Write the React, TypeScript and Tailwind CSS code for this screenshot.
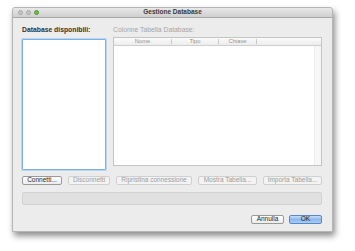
import React from 'react';

const font = { fontFamily: '"Liberation Sans", Arial, sans-serif' };

function Btn({ label, className = '', disabled = false }: { label: string; className?: string; disabled?: boolean }) {
  return (
    <div
      className={`h-[9px] flex items-center justify-center rounded-[2px] border text-[6.5px] leading-none ${
        disabled
          ? 'border-[#d0d0d0] bg-[#f3f3f3] text-[#9c9c9c]'
          : 'border-[#9a9a9a] bg-gradient-to-b from-white to-[#ececec] text-[#222]'
      } ${className}`}
    >
      {label}
    </div>
  );
}

export default function App() {
  return (
    <div className="w-[355px] h-[251px] bg-white overflow-hidden" style={font}>
      <div className="ml-[12px] mt-[7px] w-[321px] h-[225px] bg-[#ececec] rounded-t-[3px] flex flex-col shadow-[2px_4px_6px_rgba(0,0,0,0.45)] border border-[#b5b5b5]">
        {/* title bar */}
        <div className="h-[10px] shrink-0 rounded-t-[3px] bg-gradient-to-b from-[#e8e8e8] to-[#cfcfcf] border-b border-[#a8a8a8] flex items-center relative">
          <div className="flex gap-[3px] pl-[5px]">
            <span className="w-[5px] h-[5px] rounded-full bg-[#c9c9c9] border border-[#a2a2a2]" />
            <span className="w-[5px] h-[5px] rounded-full bg-[#c9c9c9] border border-[#a2a2a2]" />
            <span className="w-[5px] h-[5px] rounded-full bg-[#6cc04a] border border-[#4c9a30]" />
          </div>
          <div className="absolute inset-0 flex items-center justify-center text-[6.5px] font-bold text-[#3a3a3a] leading-none">
            Gestione Database
          </div>
        </div>

        <div className="flex-1 flex flex-col px-[9px] pr-[10px] pt-[9px]">
          <div className="flex gap-[7px]">
            <div className="w-[84px] flex flex-col">
              <div className="h-[8px] text-[6.8px] leading-none font-bold text-[#333]">Database disponibili:</div>
              <div className="mt-[4px] h-[131px] bg-white border border-[#7ab0e6] rounded-[1px] shadow-[0_0_0_1px_#b9d6f4]" />
            </div>
            <div className="flex-1 flex flex-col">
              <div className="h-[8px] text-[6.8px] leading-none text-[#a6a6a6]">Colonne Tabella Database:</div>
              <div className="mt-[2px] h-[129px] bg-white border border-[#c4c4c4] flex flex-col">
                <div className="h-[8px] flex border-b border-[#cfcfcf] bg-gradient-to-b from-[#fbfbfb] to-[#ececec] text-[5.8px] leading-none text-[#909090]">
                  <div className="w-[58px] flex items-center justify-center border-r border-[#c8c8c8] my-[1px]">Nome</div>
                  <div className="w-[47px] flex items-center justify-center border-r border-[#c8c8c8] my-[1px]">Tipo</div>
                  <div className="w-[38px] flex items-center justify-center border-r border-[#c8c8c8] my-[1px]">Chiave</div>
                  <div className="flex-1" />
                </div>
                <div className="flex-1 flex">
                  <div className="flex-1" />
                  <div className="w-[7px] bg-[#f7f7f7] border-l border-[#ededed]" />
                </div>
              </div>
            </div>
          </div>

          <div className="mt-[6px] flex gap-[6px]">
            <Btn label="Connetti..." className="w-[40px]" />
            <Btn label="Disconnetti" className="w-[42px]" disabled />
            <Btn label="Ripristina connessione" className="w-[76px]" disabled />
            <Btn label="Mostra Tabella..." className="w-[59px]" disabled />
            <Btn label="Importa Tabella..." className="flex-1" disabled />
          </div>

          <div className="mt-[7px] h-[13px] rounded-[2px] bg-[#e0e0e0] border border-[#d2d2d2]" />

          <div className="mt-[10px] flex justify-end gap-[5px]">
            <Btn label="Annulla" className="w-[33px]" />
            <div className="w-[33px] h-[9px] flex items-center justify-center rounded-[2px] border border-[#5b87c6] bg-gradient-to-b from-[#c6def8] via-[#8ab8ee] to-[#a9cdf6] text-[6.5px] leading-none text-[#1a1a1a]">
              OK
            </div>
          </div>
        </div>
      </div>
    </div>
  );
}
